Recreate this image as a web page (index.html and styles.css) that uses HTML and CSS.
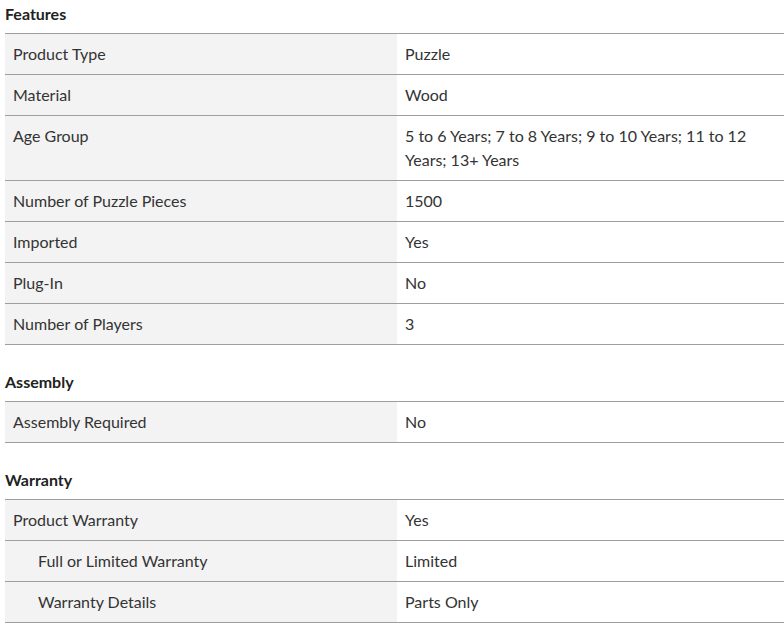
FILE: index.html
```html
<!DOCTYPE html>
<html>
<head>
<meta charset="utf-8">
<link rel="stylesheet" href="styles.css">
</head>
<body>
<div class="specs">
  <section class="group">
    <h3 class="group-title">Features</h3>
    <div class="table">
      <div class="row"><div class="label">Product Type</div><div class="value">Puzzle</div></div>
      <div class="row"><div class="label">Material</div><div class="value">Wood</div></div>
      <div class="row"><div class="label">Age Group</div><div class="value">5 to 6 Years; 7 to 8 Years; 9 to 10 Years; 11 to 12 Years; 13+ Years</div></div>
      <div class="row"><div class="label">Number of Puzzle Pieces</div><div class="value">1500</div></div>
      <div class="row"><div class="label">Imported</div><div class="value">Yes</div></div>
      <div class="row"><div class="label">Plug-In</div><div class="value">No</div></div>
      <div class="row"><div class="label">Number of Players</div><div class="value">3</div></div>
    </div>
  </section>
  <section class="group">
    <h3 class="group-title">Assembly</h3>
    <div class="table">
      <div class="row"><div class="label">Assembly Required</div><div class="value">No</div></div>
    </div>
  </section>
  <section class="group">
    <h3 class="group-title">Warranty</h3>
    <div class="table">
      <div class="row"><div class="label">Product Warranty</div><div class="value">Yes</div></div>
      <div class="row"><div class="label sub">Full or Limited Warranty</div><div class="value">Limited</div></div>
      <div class="row"><div class="label sub">Warranty Details</div><div class="value">Parts Only</div></div>
    </div>
  </section>
</div>
</body>
</html>
```
FILE: styles.css
```css
html, body {
  margin: 0;
  padding: 0;
  background: #fff;
}
body {
  font-family: Lato, "Noto Sans", sans-serif;
  font-size: 16px;
  color: #333;
  overflow: hidden;
}
.specs {
  padding-left: 5px;
}
.group + .group {
  margin-top: 23px;
}
.group-title {
  margin: 0;
  font-size: 16px;
  font-weight: 700;
  line-height: 24px;
  padding: 2px 0 7px;
  color: #222;
}
.table {
  border-top: 1px solid #9e9e9e;
}
.row {
  display: grid;
  grid-template-columns: 392px 1fr;
  border-bottom: 1px solid #9e9e9e;
}
.label {
  background: #f3f3f3;
  padding: 8px 8px;
  line-height: 24px;
}
.label.sub {
  padding-left: 33px;
}
.value {
  padding: 8px 8px;
  line-height: 24px;
}
```
